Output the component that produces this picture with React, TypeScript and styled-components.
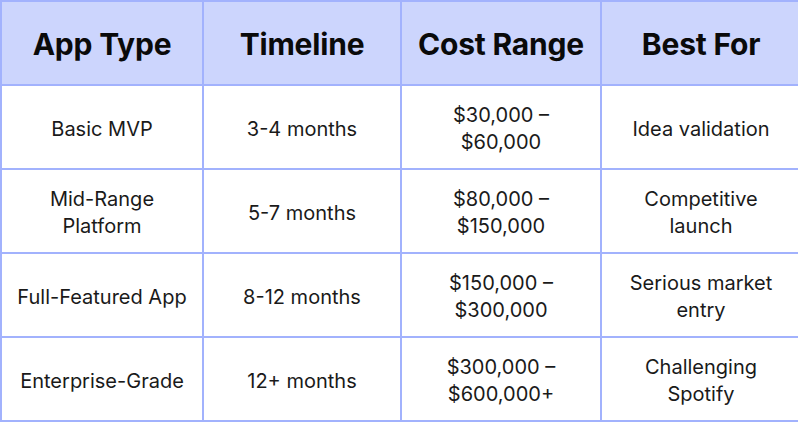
import styled, { createGlobalStyle } from "styled-components";

const GlobalStyle = createGlobalStyle`
  html, body {
    margin: 0;
    padding: 0;
    background: #fff;
  }
  body {
    font-family: "Inter", "Liberation Sans", sans-serif;
    color: #111;
  }
`;

const Table = styled.div`
  width: 802px;
  display: grid;
  grid-template-columns: 200px 196px 198px 198px;
  grid-auto-rows: 82px;
  gap: 2px;
  padding: 2px;
  background: #a2b2fd;
  box-sizing: border-box;
`;

const HeadCell = styled.div`
  background: #ccd5fd;
  display: flex;
  align-items: center;
  justify-content: center;
  padding-top: 2px;
  font-size: 30px;
  font-weight: 700;
  color: #0a0a0a;
  letter-spacing: -0.2px;
`;

const Cell = styled.div`
  background: #fff;
  display: flex;
  align-items: center;
  justify-content: center;
  text-align: center;
  padding: 4px 6px 0;
  font-size: 20px;
  line-height: 27px;
  font-weight: 400;
  color: #1a1a1a;
`;

const headers = ["App Type", "Timeline", "Cost Range", "Best For"];

const rows: string[][] = [
  ["Basic MVP", "3-4 months", "$30,000 –\n$60,000", "Idea validation"],
  ["Mid-Range\nPlatform", "5-7 months", "$80,000 –\n$150,000", "Competitive\nlaunch"],
  ["Full-Featured App", "8-12 months", "$150,000 –\n$300,000", "Serious market\nentry"],
  ["Enterprise-Grade", "12+ months", "$300,000 –\n$600,000+", "Challenging\nSpotify"],
];

const Lines = ({ text }: { text: string }) => (
  <span>
    {text.split("\n").map((line, i) => (
      <span key={i}>
        {i > 0 && <br />}
        {line}
      </span>
    ))}
  </span>
);

const App = () => {
  return (
    <>
      <GlobalStyle />
      <Table>
        {headers.map((h) => (
          <HeadCell key={h}>{h}</HeadCell>
        ))}
        {rows.map((row) =>
          row.map((cell, i) => (
            <Cell key={row[0] + i}>
              <Lines text={cell} />
            </Cell>
          ))
        )}
      </Table>
    </>
  );
};

export default App;
